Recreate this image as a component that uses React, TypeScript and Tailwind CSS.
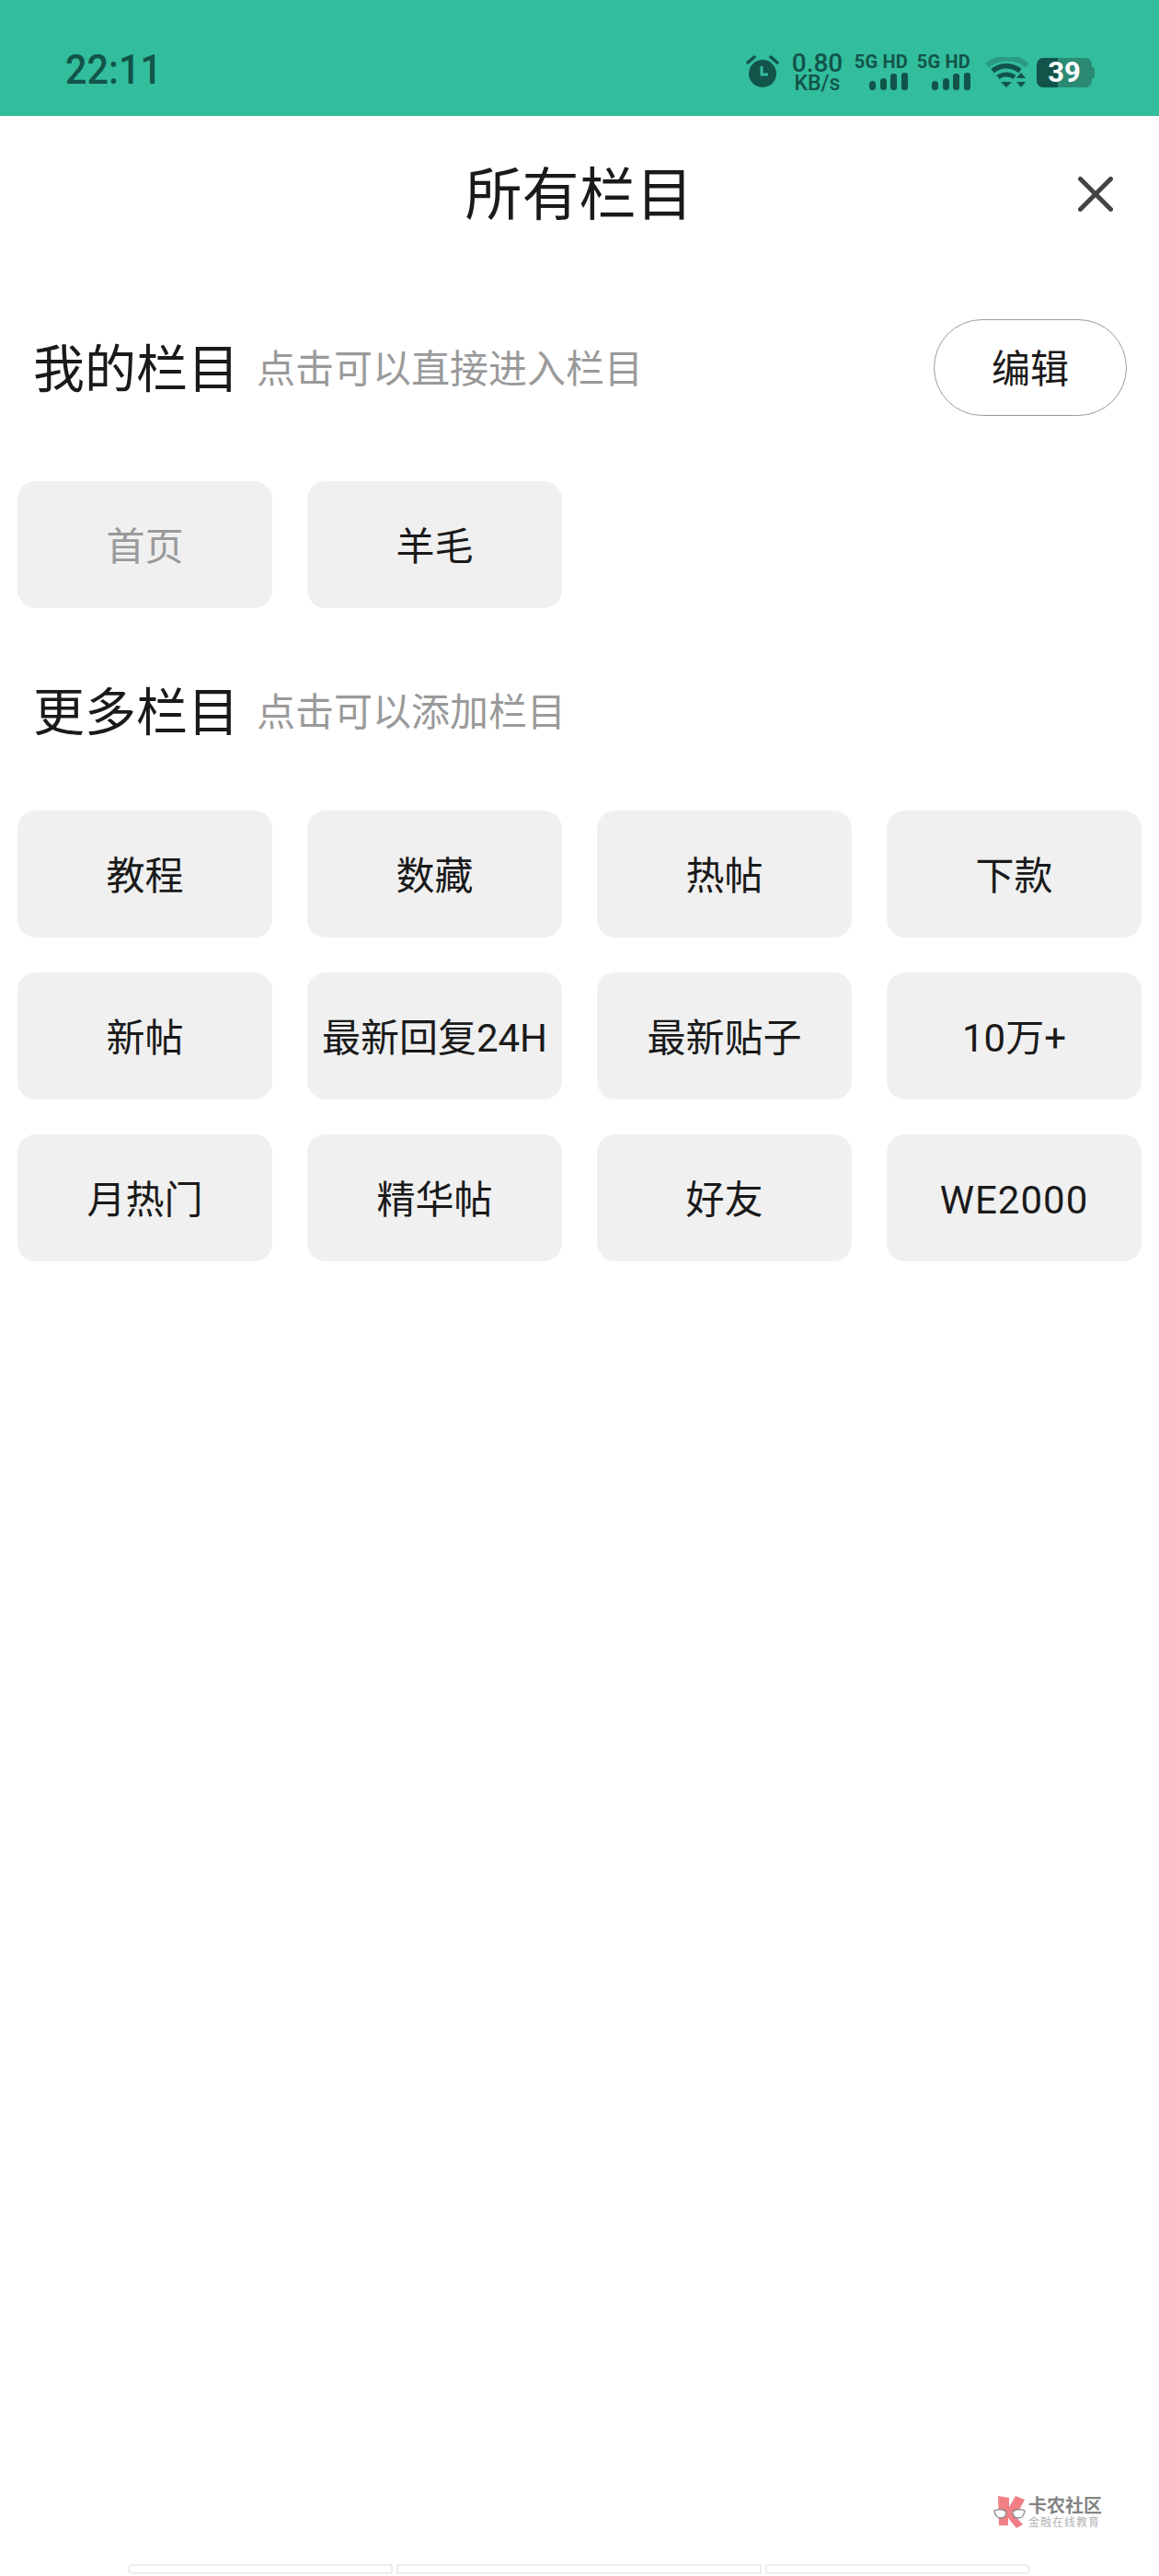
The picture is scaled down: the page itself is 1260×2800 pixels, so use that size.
import React from 'react';

const cjk = { fontFamily: 'Roboto, "Noto Sans CJK SC", sans-serif' };

const myColumns = [
  { name: '首页', muted: true },
  { name: '羊毛', muted: false },
];

const moreColumns = ['教程', '数藏', '热帖', '下款', '新帖', '最新回复24H', '最新贴子', '10万+', '月热门', '精华帖', '好友', 'WE2000'];

const SignalBars: React.FC = () => (
  <svg width="42" height="20" viewBox="0 0 42 20" className="block" fill="#12544a">
    <rect x="0" y="9" width="7" height="10" rx="3.5" />
    <rect x="12" y="6" width="7" height="13" rx="3.5" />
    <rect x="23" y="1" width="7" height="18" rx="3" />
    <rect x="35" y="0" width="7" height="19" rx="3" />
  </svg>
);

const Signal: React.FC = () => (
  <div className="flex w-[57px] flex-col items-end">
    <span className="font-['Roboto'] text-[20px] leading-[18px] font-bold tracking-[0.2px] whitespace-nowrap text-[#12544a]">5G HD</span>
    <div className="mt-[3px]">
      <SignalBars />
    </div>
  </div>
);

const StatusBar: React.FC = () => (
  <div className="flex h-[126px] items-start justify-between bg-[#32bd9c] pt-[56px] pr-[70px] pl-[71px]">
    <span className="mt-[-2px] origin-left scale-x-[0.94] font-['Roboto'] text-[44px] leading-[44px] font-medium text-[#12544a]">22:11</span>
    <div className="flex items-start">
      <svg width="36" height="36" viewBox="0 0 36 36" className="mt-[4px]">
        <circle cx="18" cy="20" r="15" fill="#12544a" />
        <path d="M17 12v9h7" fill="none" stroke="#32bd9c" strokeWidth="3" />
        <path d="M2 8l7-6M34 8l-7-6" stroke="#12544a" strokeWidth="3.5" strokeLinecap="round" />
      </svg>
      <div className="ml-[13px] flex w-[57px] flex-col items-center text-[#12544a]">
        <span className="font-['Roboto'] text-[28px] leading-[26px] font-medium">0.80</span>
        <span className="font-['Roboto'] text-[23px] leading-[18px] font-medium">KB/s</span>
      </div>
      <div className="mt-[2px] ml-[13px]">
        <Signal />
      </div>
      <div className="mt-[2px] ml-[11px]">
        <Signal />
      </div>
      <svg width="46" height="34" viewBox="0 0 46 34" className="mt-[6px] ml-[17px]">
        <path d="M1 9C13-1 33-1 45 9" fill="none" stroke="#2a9a82" strokeWidth="6" />
        <path d="M7 15c9-7 21-7 30 0" fill="none" stroke="#12544a" strokeWidth="5.5" />
        <path d="M13 22c5-4 13-4 18 0" fill="none" stroke="#12544a" strokeWidth="5" />
        <path d="M16 27h12l-6 6z" fill="#12544a" />
        <path d="M38 17l5 6h-10zM38 33l5-6h-10z" fill="#12544a" />
      </svg>
      <div className="relative mt-[4px] ml-[9px] flex h-[38px] w-[60px] items-center">
        <div className="h-[32px] w-[23px] rounded-l-[7px] bg-[#12544a]" />
        <div className="h-[32px] w-[37px] rounded-r-[7px] bg-[#2a8a74]" />
        <span className="absolute inset-0 text-center font-['Roboto'] text-[31px] leading-[38px] font-bold text-white">39</span>
      </div>
      <div className="mt-[17px] h-[12px] w-[3px] rounded-r-[2px] bg-[#2a8a74]" />
    </div>
  </div>
);

const ColumnCard: React.FC<{ name: string; muted?: boolean }> = ({ name, muted }) => (
  <div className={`flex h-[138px] items-center justify-center rounded-[20px] bg-[#f0f0f0] pt-[5px] text-[42px] whitespace-nowrap ${name === 'WE2000' ? 'tracking-[1px]' : ''} ${muted ? 'text-[#9a9a9a]' : 'text-[#1a1a1a]'}`}>
    {name}
  </div>
);

const SectionHeader: React.FC<{ title: string; hint: string; children?: React.ReactNode }> = ({ title, hint, children }) => (
  <div className="flex h-[105px] items-center pr-[35px] pl-[36px]">
    <span className="pt-[5px] text-[56px] leading-none text-[#1a1a1a]">{title}</span>
    <span className="ml-[19px] pt-[5px] text-[42px] leading-none text-[#9a9a9a]">{hint}</span>
    {children}
  </div>
);

const Watermark: React.FC = () => (
  <div className="absolute top-[2713px] left-[1080px] flex items-center opacity-90">
    <svg width="36" height="36" viewBox="0 0 36 36" className="block">
      <path d="M5 0l12 2v10l7-12 10 4-7 13-7 1 12 13-7 4-9-11v8l-10 0z" fill="#f0737a" />
      <path d="M1 16q7-3 13 1q0 7-6 7q-6 0-7-8z" fill="#fff" stroke="#777777" strokeWidth="1.3" />
      <path d="M21 17q6-4 13-1q-1 8-7 8q-6 0-6-7z" fill="#fff" stroke="#777777" strokeWidth="1.3" />
    </svg>
    <div className="ml-[2px] flex flex-col items-start">
      <span className="text-[20px] leading-[20px] font-bold text-[#777777]">卡农社区</span>
      <span className="mt-[1px] text-[12px] leading-[14px] tracking-[1px] text-[#aaaaaa]">金融在线教育</span>
    </div>
  </div>
);

const App: React.FC = () => {
  return (
    <div className="relative flex h-[2800px] w-[1260px] flex-col bg-white" style={cjk}>
      <StatusBar />

      <div className="grid h-[172px] grid-cols-[1fr_auto_1fr] items-center">
        <div />
        <h1 className="mt-[1px] ml-[-1px] text-[62px] leading-none font-normal text-[#1a1a1a]">所有栏目</h1>
        <div className="flex justify-end pr-[50px]">
          <svg width="38" height="38" viewBox="0 0 38 38" fill="none" stroke="#444444" strokeWidth="5" strokeLinecap="round" className="mb-[2px]">
            <path d="M2.5 2.5l33 33M35.5 2.5l-33 33" />
          </svg>
        </div>
      </div>

      <div className="mt-[49px]">
        <SectionHeader title="我的栏目" hint="点击可以直接进入栏目">
          <button className="ml-auto h-[105px] w-[210px] rounded-full border border-[#999999] pt-[3px] text-[42px] text-[#1a1a1a]">编辑</button>
        </SectionHeader>
      </div>

      <div className="mt-[71px] grid grid-cols-4 gap-x-[38px] px-[19px]">
        {myColumns.map((item) => (
          <ColumnCard key={item.name} name={item.name} muted={item.muted} />
        ))}
      </div>

      <div className="mt-[59px]">
        <SectionHeader title="更多栏目" hint="点击可以添加栏目" />
      </div>

      <div className="mt-[56px] grid grid-cols-4 gap-x-[38px] gap-y-[38px] px-[19px]">
        {moreColumns.map((name) => (
          <ColumnCard key={name} name={name} />
        ))}
      </div>

      <Watermark />

      <div className="mt-auto mb-[2px] ml-[139px] flex h-[11px] w-[981px] gap-[4px]">
        <div className="w-[288px] rounded-l-full border-2 border-[#ececec]" />
        <div className="w-[397px] border-2 border-[#ececec]" />
        <div className="w-[288px] rounded-r-full border-2 border-[#ececec]" />
      </div>
    </div>
  );
};

export default App;
